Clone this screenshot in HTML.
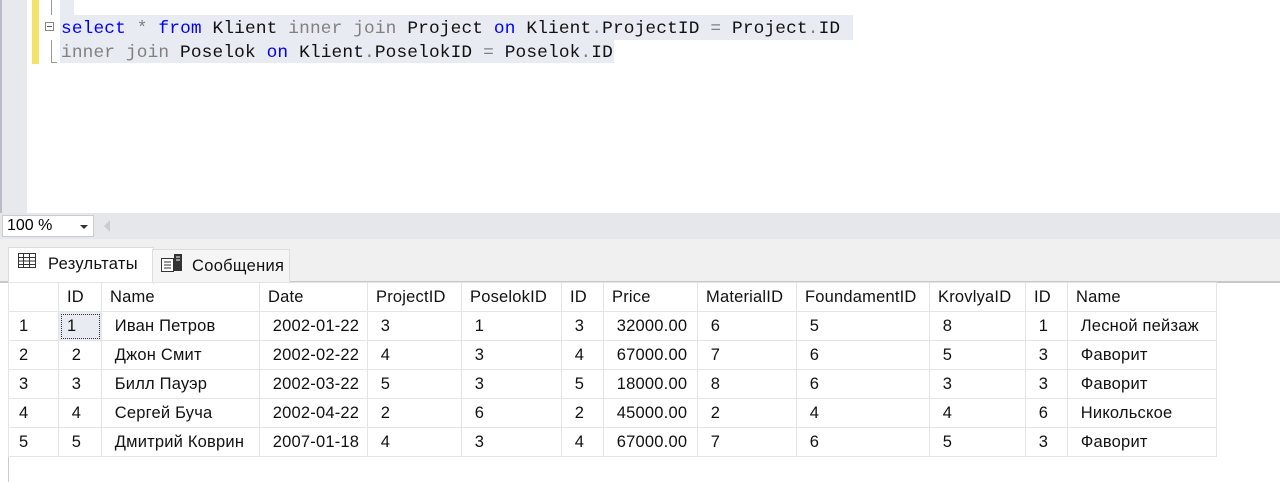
<!DOCTYPE html>
<html><head><meta charset="utf-8"><style>
body{margin:0;width:1280px;height:482px;position:relative;overflow:hidden;background:#fff;font-family:"Liberation Sans",sans-serif}
.a{position:absolute}
.code{font-family:"Liberation Mono",monospace;font-size:17.8px;letter-spacing:0.15px;white-space:pre;color:#111}
.k{color:#0000ff}.g{color:#808080}
table{border-collapse:collapse;font-size:16.5px;color:#111}
td{border:1px solid #e4e4e4;height:28px;padding:0 0 0 8px;white-space:nowrap;letter-spacing:0.2px;overflow:hidden}
</style></head><body>
<div class="a" style="left:0;top:0;width:27px;height:213px;background:#e8e9ed;border-left:2px solid #b8bcc8;box-sizing:border-box"></div>
<div class="a" style="left:32px;top:0;width:7px;height:64px;background:#f5e26a"></div>
<div class="a" style="left:51px;top:0;width:1px;height:15px;background:#999"></div>
<div class="a" style="left:60px;top:0;width:14px;height:15px;background:#e8ebf1"></div>
<div class="a" style="left:60px;top:15px;width:793px;height:25px;background:#e8ebf1"></div>
<div class="a" style="left:60px;top:40px;width:554px;height:23px;background:#e8ebf1"></div>
<div class="a" style="left:45px;top:22px;width:9px;height:9px;border:1px solid #888;box-sizing:border-box;background:#fff"></div>
<div class="a" style="left:47px;top:26px;width:5px;height:1px;background:#555"></div>
<div class="a" style="left:51px;top:40px;width:1px;height:22px;background:#999"></div>
<div class="a" style="left:51px;top:62px;width:6px;height:1px;background:#999"></div>
<div class="a code" style="left:61px;top:19px"><span class="k">select</span> <span class="g">*</span> <span class="k">from</span> Klient <span class="g">inner join</span> Project <span class="k">on</span> Klient<span class="g">.</span>ProjectID <span class="g">=</span> Project<span class="g">.</span>ID</div>
<div class="a code" style="left:61px;top:43px"><span class="g">inner join</span> Poselok <span class="k">on</span> Klient<span class="g">.</span>PoselokID <span class="g">=</span> Poselok<span class="g">.</span>ID</div>

<div class="a" style="left:0;top:213px;width:1280px;height:26px;background:#e6e7eb"></div>
<div class="a" style="left:2px;top:215px;width:92px;height:22px;background:#fff;border:1px solid #ccc;box-sizing:border-box;font-size:16px;padding:1px 0 0 4px">100 %</div>
<div class="a" style="left:80px;top:225px;border-left:4px solid transparent;border-right:4px solid transparent;border-top:4px solid #333"></div>
<div class="a" style="left:104px;top:220px;border-top:6px solid transparent;border-bottom:6px solid transparent;border-right:6px solid #ccc"></div>
<div class="a" style="left:0;top:239px;width:1280px;height:42px;background:#f0f0f0;border-bottom:2px solid #c8c8c8"></div>
<div class="a" style="left:8px;top:247px;width:144px;height:36px;background:#fff;border:1px solid #ddd;border-bottom:none"></div>
<div class="a" style="left:152px;top:249px;width:136px;height:32px;background:#f5f5f5;border:1px solid #ddd;border-bottom:none"></div>
<svg class="a" style="left:18px;top:253px" width="18" height="16"><rect x="0.5" y="0.5" width="17" height="14" fill="#fff" stroke="#333"/><path d="M0 4.5H18M0 8H18M0 11.5H18M5.5 0V15M11.5 0V15" stroke="#333"/></svg>
<div class="a" style="left:48px;top:255px;font-size:16.5px;letter-spacing:0.3px;color:#111">Результаты</div>
<svg class="a" style="left:161px;top:253px" width="22" height="20"><rect x="0.5" y="5.5" width="12" height="13" fill="#fff" stroke="#333"/><path d="M3 9H10M3 12H10M3 15H10" stroke="#333"/><rect x="13" y="1" width="8" height="17" fill="#333"/><path d="M15 4H19M15 7H19" stroke="#fff"/></svg>
<div class="a" style="left:192px;top:257px;font-size:16.5px;letter-spacing:0.3px;color:#111">Сообщения</div>

<div class="a" style="left:8px;top:282px;width:1px;height:200px;background:#ccc"></div>
<table class="a" style="left:8px;top:282px;table-layout:fixed;width:1208px">
<colgroup><col style="width:50px"><col style="width:43px"><col style="width:158px"><col style="width:108px"><col style="width:94px"><col style="width:100px"><col style="width:42px"><col style="width:94px"><col style="width:99px"><col style="width:133px"><col style="width:96px"><col style="width:42px"><col style="width:149px"></colgroup>
<tr><td></td><td>ID</td><td>Name</td><td>Date</td><td>ProjectID</td><td>PoselokID</td><td>ID</td><td>Price</td><td>MaterialID</td><td>FoundamentID</td><td>KrovlyaID</td><td>ID</td><td>Name</td></tr>
<tr><td style="padding-left:10px">1</td><td style="outline:1px dotted #333;outline-offset:-3px;background:#e8ecf2">1</td><td>&nbsp;Иван Петров</td><td>&nbsp;2002-01-22</td><td>&nbsp;3</td><td>&nbsp;1</td><td>&nbsp;3</td><td>&nbsp;32000.00</td><td>&nbsp;6</td><td>&nbsp;5</td><td>&nbsp;8</td><td>&nbsp;1</td><td>&nbsp;Лесной пейзаж</td></tr>
<tr><td style="padding-left:10px">2</td><td>&nbsp;2</td><td>&nbsp;Джон Смит</td><td>&nbsp;2002-02-22</td><td>&nbsp;4</td><td>&nbsp;3</td><td>&nbsp;4</td><td>&nbsp;67000.00</td><td>&nbsp;7</td><td>&nbsp;6</td><td>&nbsp;5</td><td>&nbsp;3</td><td>&nbsp;Фаворит</td></tr>
<tr><td style="padding-left:10px">3</td><td>&nbsp;3</td><td>&nbsp;Билл Пауэр</td><td>&nbsp;2002-03-22</td><td>&nbsp;5</td><td>&nbsp;3</td><td>&nbsp;5</td><td>&nbsp;18000.00</td><td>&nbsp;8</td><td>&nbsp;6</td><td>&nbsp;3</td><td>&nbsp;3</td><td>&nbsp;Фаворит</td></tr>
<tr><td style="padding-left:10px">4</td><td>&nbsp;4</td><td>&nbsp;Сергей Буча</td><td>&nbsp;2002-04-22</td><td>&nbsp;2</td><td>&nbsp;6</td><td>&nbsp;2</td><td>&nbsp;45000.00</td><td>&nbsp;2</td><td>&nbsp;4</td><td>&nbsp;4</td><td>&nbsp;6</td><td>&nbsp;Никольское</td></tr>
<tr><td style="padding-left:10px">5</td><td>&nbsp;5</td><td>&nbsp;Дмитрий Коврин</td><td>&nbsp;2007-01-18</td><td>&nbsp;4</td><td>&nbsp;3</td><td>&nbsp;4</td><td>&nbsp;67000.00</td><td>&nbsp;7</td><td>&nbsp;6</td><td>&nbsp;5</td><td>&nbsp;3</td><td>&nbsp;Фаворит</td></tr>
</table>
</body></html>
